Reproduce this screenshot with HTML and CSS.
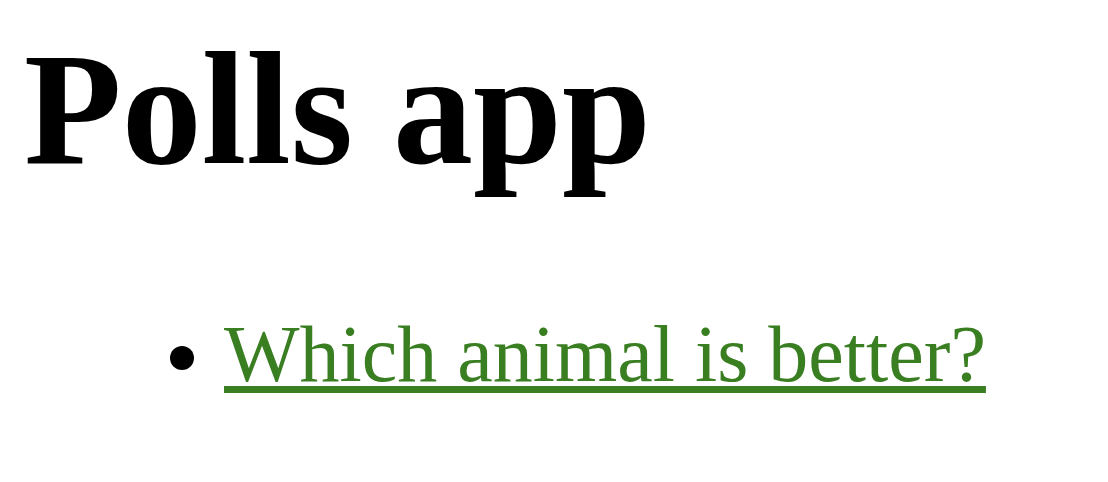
FILE: index.html
```html
<!DOCTYPE html>
<html>
<head>
<meta charset="utf-8">
<title>Polls app</title>
<link rel="stylesheet" href="styles.css">
</head>
<body>
<h1 class="title">Polls app</h1>
<ul class="poll-list">
  <li class="poll-item"><a class="poll-link" href="#">Which animal is better?</a></li>
</ul>
</body>
</html>
```
FILE: styles.css
```css
html, body {
  margin: 0;
  padding: 0;
  background: #ffffff;
}
body {
  font-family: "Liberation Serif", "Times New Roman", serif;
  font-size: 80px;
  color: #000000;
  padding: 17px 0 0 24px;
}
.title {
  font-size: 160px;
  font-weight: bold;
  line-height: normal;
  margin: 0;
}
.poll-list {
  margin: 107px 0 0 0;
  padding-left: 200px;
  list-style: disc;
}
.poll-link {
  color: #3a7e22;
  text-decoration: underline;
  text-decoration-thickness: 7px;
  text-underline-offset: 5px;
}
```
